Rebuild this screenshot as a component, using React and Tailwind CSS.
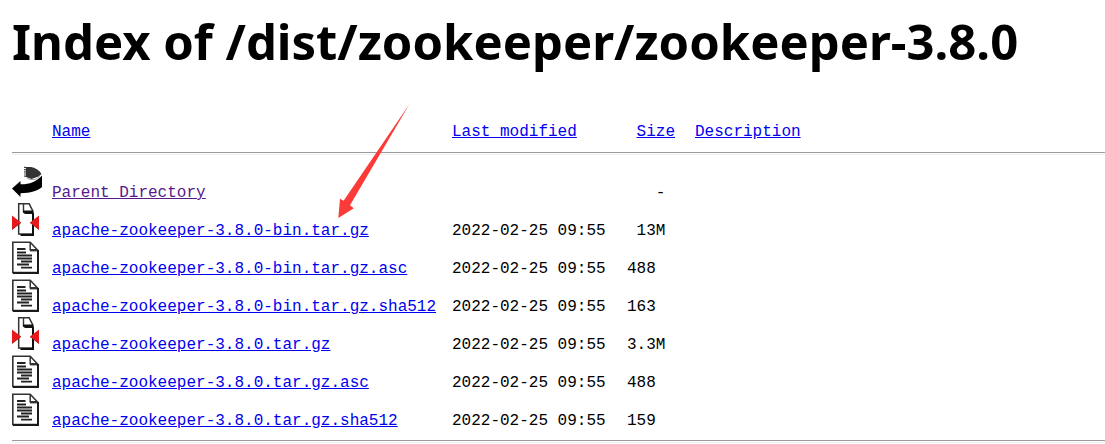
const files = [
  { icon: 'back', name: 'Parent Directory', date: '', size: '   -', visited: true },
  { icon: 'archive', name: 'apache-zookeeper-3.8.0-bin.tar.gz', date: '2022-02-25 09:55', size: ' 13M' },
  { icon: 'text', name: 'apache-zookeeper-3.8.0-bin.tar.gz.asc', date: '2022-02-25 09:55', size: '488' },
  { icon: 'text', name: 'apache-zookeeper-3.8.0-bin.tar.gz.sha512', date: '2022-02-25 09:55', size: '163' },
  { icon: 'archive', name: 'apache-zookeeper-3.8.0.tar.gz', date: '2022-02-25 09:55', size: '3.3M' },
  { icon: 'text', name: 'apache-zookeeper-3.8.0.tar.gz.asc', date: '2022-02-25 09:55', size: '488' },
  { icon: 'text', name: 'apache-zookeeper-3.8.0.tar.gz.sha512', date: '2022-02-25 09:55', size: '159' },
];

function BackIcon() {
  return (
    <>
      <path d="M14 2h5c4 .5 8 3 10.500 7l-3 2.500-7 2.500-5.500-2z" fill="#333" />
      <path d="M13 1.800v11" stroke="#444" strokeWidth="2" strokeDasharray="1.200 1" />
      <path d="M15 13.200l3 1.300h5l5-3" fill="none" stroke="#aaa" strokeWidth="1" />
      <path d="M0 23.500L8.500 16v3.300C17 19.500 24 17 30 10.500V22c-5 4-11 6-21.500 6.300V32z" fill="#000" />
    </>
  );
}

function ArchiveIcon() {
  return (
    <>
      <path d="M6.700 .7h10.500L21 8.500V31H6.700z" fill="#fff" />
      <path d="M6.700 31V.8h10.500L21 8.500V31z" fill="none" stroke="#333" strokeWidth="1.500" />
      <path d="M11.500 1v8.500" stroke="#333" strokeWidth="1.400" />
      <path d="M11 7.500h10v3.500h-8l-2-1.500z" fill="#111" />
      <path d="M8.500 32H21V10" fill="none" stroke="#111" strokeWidth="2" />
      <path d="M0 12.500l9 7-9 7z" fill="#e8191c" />
      <path d="M27 12.500l-9 7 9 7z" fill="#e8191c" />
      <path d="M0 26.500l9-7M27 26.500l-9-7" stroke="#b01414" strokeWidth="1" />
    </>
  );
}

function TextIcon() {
  return (
    <>
      <path d="M.8 1.200h17.400l7.600 8V31.500H.8z" fill="#fff" stroke="#333" strokeWidth="1.600" />
      <path d="M18.200 1.200v7.600h7.500" fill="none" stroke="#333" strokeWidth="1.500" />
      <path d="M18 9.600h8" stroke="#333" strokeWidth="1.600" />
      <path d="M1 32h25V9" fill="none" stroke="#1a1a1a" strokeWidth="2" />
      <path
        d="M5 8h8.500M5 11.500h9M5 14.500h15M5 17.500h15M9 20.500h11M5 23.500h12M9 26.700h11"
        stroke="#222"
        strokeWidth="1.800"
      />
    </>
  );
}

function FileIcon({ kind }) {
  return (
    <svg className="block h-[33px] w-[30px]" viewBox="0 0 30 33" aria-hidden="true">
      {kind === 'back' && <BackIcon />}
      {kind === 'archive' && <ArchiveIcon />}
      {kind === 'text' && <TextIcon />}
    </svg>
  );
}

function Rule() {
  return <hr className="h-[3px] border-t border-b border-t-[#9a9a9a] border-b-[#eeeeee]" />;
}

export default function App() {
  return (
    <main className="relative overflow-x-hidden bg-white pl-3 text-black">
      <h1 className="pt-[7px] font-['Noto_Sans','Open_Sans',sans-serif] text-[49px] leading-[68px] font-bold whitespace-nowrap">
        Index of /dist/zookeeper/zookeeper-3.8.0
      </h1>
      <table className="mt-[47px] w-full table-fixed border-collapse text-left font-['Liberation_Mono',monospace] text-base leading-5 whitespace-pre">
        <colgroup>
          <col className="w-10" />
          <col className="w-[400px]" />
          <col className="w-[175px]" />
          <col className="w-[68px]" />
          <col />
        </colgroup>
        <thead className="text-[#0000ee]">
          <tr>
            <td className="p-0" />
            <th className="p-0 font-normal"><a className="underline" href="#name">Name</a></th>
            <th className="p-0 font-normal"><a className="underline" href="#modified">Last modified</a></th>
            <th className="p-0 font-normal">{' '}<a className="underline" href="#size">Size</a></th>
            <th className="p-0 font-normal"><a className="underline" href="#description">Description</a></th>
          </tr>
          <tr>
            <td colSpan={5} className="px-0 py-[10px]"><Rule /></td>
          </tr>
        </thead>
        <tbody>
          {files.map((file) => (
            <tr key={file.name} className="h-[38px]">
              <td className="p-0 align-top"><FileIcon kind={file.icon} /></td>
              <td className="p-0 align-bottom">
                <a
                  className={file.visited ? 'text-[#551a8b] underline' : 'text-[#0000ee] underline'}
                  href={'#' + file.name.replace(' ', '-')}
                >
                  {file.name}
                </a>
              </td>
              <td className="p-0 align-bottom">{file.date}</td>
              <td className="p-0 align-bottom">{file.size}</td>
              <td className="p-0" />
            </tr>
          ))}
        </tbody>
      </table>
      <div className="pt-[9px]"><Rule /></div>
      <svg
        className="pointer-events-none absolute top-[103px] left-[337px] h-[116px] w-[74px]"
        viewBox="337 103 74 116"
        aria-hidden="true"
      >
        <path d="M338.300 218l1.700-19.300 3.600 2L409.500 104 350 205.300l3.800 3z" fill="#fc3a38" />
      </svg>
    </main>
  );
}
